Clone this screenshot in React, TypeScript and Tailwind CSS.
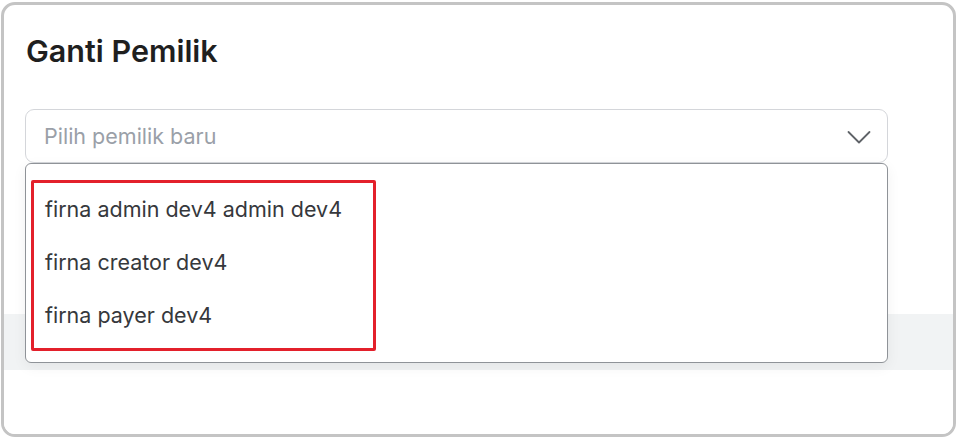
import React from 'react'

const owners = ['firna admin dev4 admin dev4', 'firna creator dev4', 'firna payer dev4']

export default function App() {
  return (
    <div className="w-[958px] h-[441px] bg-white pl-[1px] pt-[2px]" style={{ fontFamily: 'Inter, "Noto Sans", sans-serif' }}>
      <div className="w-[955px] h-[435px] border-[3px] border-[#c4c4c4] rounded-[14px] bg-white flex flex-col overflow-hidden">
        <div className="px-[22px] pt-[26px] h-[104px]">
          <h2 className="text-[30.5px] leading-[40px] font-semibold text-[#1f1f1f]">Ganti Pemilik</h2>
        </div>
        <div className="px-[21px] h-[205px]">
          <div className="relative w-[863px]">
            <button className="w-full h-[54px] flex items-center justify-between pl-[18px] pr-[16px] border border-[#d4d6da] rounded-[9px] bg-white">
              <span className="text-[21.5px] text-[#9aa0a8]">Pilih pemilik baru</span>
              <svg width="24" height="24" viewBox="0 0 24 24" fill="none" stroke="#5f6368" strokeWidth="1.8" strokeLinecap="round" strokeLinejoin="round">
                <path d="M1.5 8l10.5 10.5L22.5 8" />
              </svg>
            </button>
            <div className="absolute left-0 top-[54px] w-full h-[200px] z-10 bg-white border border-[#8f9398] rounded-[6px] shadow-[0_4px_14px_rgba(0,0,0,0.06)] pt-[16px] pl-[5px]">
              <ul className="w-[345px] border-[3px] border-[#e3202b] rounded-[2px] pb-[6px]">
                {owners.map((o) => (
                  <li key={o} className="h-[53px] flex items-center pl-[11px] text-[21.5px] text-[#36383c]">{o}</li>
                ))}
              </ul>
            </div>
          </div>
        </div>
        <div className="h-[56px] bg-[#f1f3f4]" />
        <div className="flex-1 bg-white" />
      </div>
    </div>
  )
}
